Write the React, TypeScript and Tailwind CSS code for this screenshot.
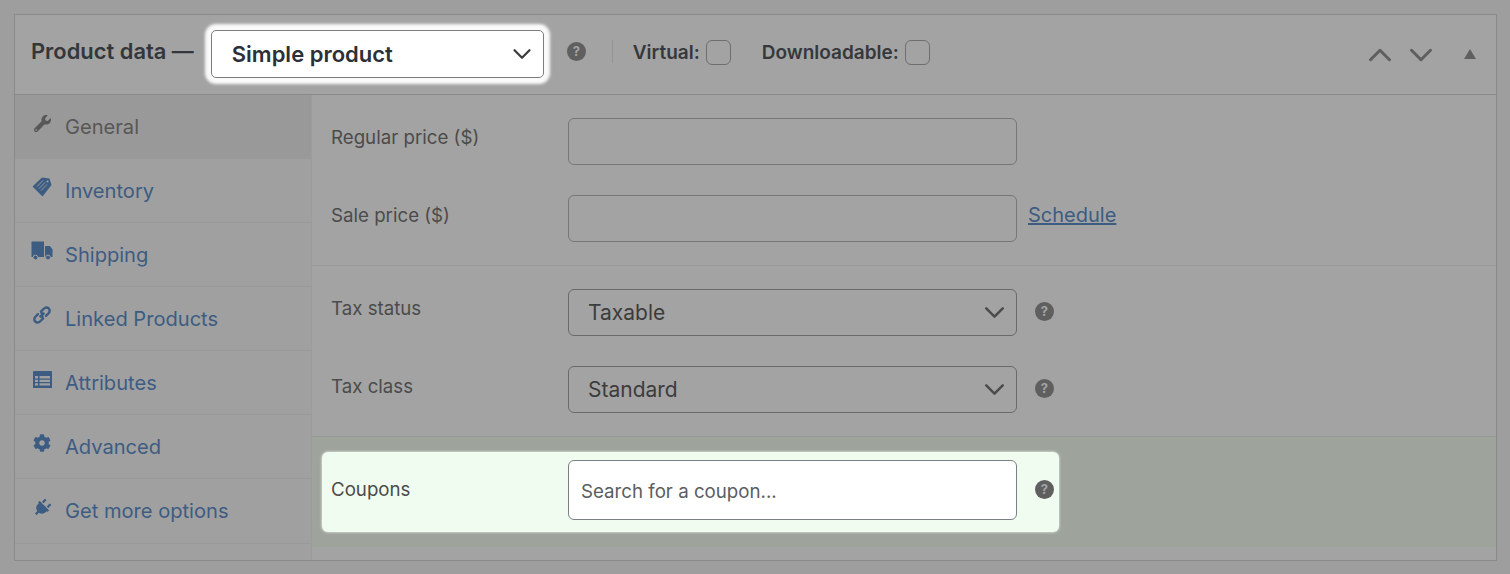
import { ChevronDown, ChevronUp } from 'lucide-react'
import type { ReactNode } from 'react'
import { FaCog, FaPlug, FaWrench } from 'react-icons/fa'

const TagIcon = () => (
  <svg viewBox="0 0 20 20" className="w-5 h-5" fill="currentColor">
    <path d="M10 0.5 L17.5 1.5 L19.5 8 L10.5 19.5 L0.5 9.5 Z" />
    <path d="M5 9.5 L11 3.5 M7 11.5 L13 5.5 M9 13.5 L15 7.5" stroke="#a0a0a0" strokeWidth="0.9" />
    <circle cx="15.5" cy="4.5" r="1.1" fill="#a0a0a0" />
  </svg>
)

const TruckIcon = () => (
  <svg viewBox="0 0 22 20" className="w-[22px] h-5" fill="currentColor">
    <path d="M0.5 1 Q0.5 0.5 1 0.5 H13 V16 H0.5 Z" />
    <path d="M14 5 H19 L21.5 8.5 V16 H14 Z" />
    <circle cx="4.5" cy="16.5" r="2.4" stroke="#a0a0a0" strokeWidth="1" />
    <circle cx="17" cy="16.5" r="2.4" stroke="#a0a0a0" strokeWidth="1" />
  </svg>
)

const LinkIcon = () => (
  <svg viewBox="0 0 20 20" className="w-5 h-5" fill="none" stroke="currentColor" strokeWidth="2.4" strokeLinecap="round">
    <path d="M8.5 11.5 L11 9 A3 3 0 0 1 9 6.5 L12 3.5 A3.2 3.2 0 0 1 16.8 8 L14 10.8" />
    <path d="M11.5 8.5 L9 11 A3 3 0 0 1 11 13.5 L8 16.5 A3.2 3.2 0 0 1 3.2 12 L6 9.2" />
  </svg>
)

const TableIcon = () => (
  <svg viewBox="0 0 19 17" className="w-[19px] h-[17px]" fill="currentColor">
    <path d="M0 1 Q0 0 1 0 H18 Q19 0 19 1 V17 H0 Z" />
    <path d="M2 5 H5 V7.5 H2 Z M2 8.8 H5 V11 H2 Z M2 12.2 H5 V14.5 H2 Z M6.5 5 H17 V7.5 H6.5 Z M6.5 8.8 H17 V11 H6.5 Z M6.5 12.2 H17 V14.5 H6.5 Z" fill="#a0a0a0" />
  </svg>
)

const tabs: { label: string; icon: ReactNode; active?: boolean }[] = [
  { label: 'General', icon: <FaWrench className="w-[17px] h-[17px]" />, active: true },
  { label: 'Inventory', icon: <TagIcon /> },
  { label: 'Shipping', icon: <TruckIcon /> },
  { label: 'Linked Products', icon: <LinkIcon /> },
  { label: 'Attributes', icon: <TableIcon /> },
  { label: 'Advanced', icon: <FaCog className="w-[18px] h-[18px]" /> },
  { label: 'Get more options', icon: <FaPlug className="w-[18px] h-[18px] rotate-45" /> },
]

const Help = () => (
  <span className="flex w-[19px] h-[19px] shrink-0 items-center justify-center rounded-full bg-[#5f5f5f] text-[13px] font-bold leading-none text-[#a3a3a3]">
    ?
  </span>
)

const Checkbox = () => (
  <span className="ml-[6px] -mt-[5px] block w-[25px] h-[25px] rounded-[6px] border border-[#6e6e6e]" />
)

const Field = ({ label, labelClass = '-mt-[6px]', children }: { label: string; labelClass?: string; children?: ReactNode }) => (
  <div className="flex items-center">
    <span className={`w-[256px] pl-[19px] shrink-0 text-[18.7px] text-[#4b4b4b] ${labelClass}`}>{label}</span>
    {children}
  </div>
)

const Input = () => (
  <div className="w-[449px] h-[47px] rounded-[6px] border border-[#777777]" />
)

const Select = ({ value }: { value: string }) => (
  <div className="flex w-[449px] h-[47px] items-center justify-between rounded-[6px] border border-[#6a6a6a] pl-[19px] pr-[5px] text-[21px] text-[#3c3c3c]">
    {value}
    <ChevronDown className="w-[33px] h-[33px] text-[#4b4b4b]" strokeWidth={1.8} />
  </div>
)

export default function App() {
  return (
    <div className="h-[574px] w-[1510px] overflow-hidden bg-[#9e9e9e] p-[14px] font-['Inter','Roboto',sans-serif]">
      <div className="h-[547px] w-[1483px] border border-[#8a8a8a] bg-[#a3a3a3]">
        <header className="flex h-[80px] items-center border-b border-[#8a8a8a] pl-[16px] pr-[20px]">
          <span className="text-[21.9px] font-semibold text-[#33363a] -mt-[6px]">Product data —</span>
          <div className="ml-[17px] -mt-[2px] flex w-[333px] h-[48px] items-center justify-between rounded-[5px] border border-[#7d7d7d] bg-white pl-[20px] pr-[6px] text-[22px] font-semibold text-[#2c3038] shadow-[0_0_3px_6px_rgba(255,255,255,0.95)]">
            <span className="mt-[2px]">Simple product</span>
            <ChevronDown className="w-[30px] h-[30px] text-[#3c3c3c]" strokeWidth={1.8} />
          </div>
          <div className="ml-[23px] -mt-[7px]"><Help /></div>
          <span className="ml-[26px] -mt-[7px] h-[23px] w-px bg-[#949494]" />
          <span className="ml-[20px] -mt-[2px] text-[19px] font-semibold text-[#36383c]">Virtual:</span>
          <Checkbox />
          <span className="ml-[31px] -mt-[2px] text-[19px] font-semibold text-[#36383c]">Downloadable:</span>
          <Checkbox />
          <div className="ml-auto flex items-center text-[#5f5f5f]">
            <ChevronUp className="w-[38px] h-[38px]" strokeWidth={1.9} />
            <ChevronDown className="ml-[3px] w-[38px] h-[38px]" strokeWidth={1.9} />
            <span className="ml-[24px] -mt-[2px] h-0 w-0 border-x-[6px] border-b-[10px] border-x-transparent border-b-[#5f5f5f]" />
          </div>
        </header>
        <div className="flex h-[465px]">
          <nav className="w-[297px] shrink-0 border-r border-[#9c9c9c] bg-[#a0a0a0]">
            {tabs.map(tab => (
              <div
                key={tab.label}
                className={`flex h-[64.09px] items-center border-b ${
                  tab.active ? 'border-transparent bg-[#999999] text-[#575757]' : 'border-[#999999] text-[#3d5c82]'
                }`}
              >
                <span className="flex w-[50px] shrink-0 justify-center pl-[4px] -mt-[7px]">{tab.icon}</span>
                <span className="mt-[1px] text-[20.1px]">{tab.label}</span>
              </div>
            ))}
          </nav>
          <main className="flex-1 flex flex-col">
            <div className="flex flex-col gap-[30px] pt-[23px] pb-[23px] border-b border-[#999999]">
              <Field label="Regular price ($)"><Input /></Field>
              <Field label="Sale price ($)" labelClass="-mt-[4px]">
                <Input />
                <a className="ml-[11px] -mt-[8px] text-[20px] text-[#3d5c82] underline">Schedule</a>
              </Field>
            </div>
            <div className="flex flex-col gap-[30px] pt-[23px] pb-[23px] border-b border-[#999999]">
              <Field label="Tax status">
                <Select value="Taxable" />
                <span className="ml-[18px] -mt-[2px]"><Help /></span>
              </Field>
              <Field label="Tax class" labelClass="-mt-[4px]">
                <Select value="Standard" />
                <span className="ml-[18px] -mt-[2px]"><Help /></span>
              </Field>
            </div>
            <div className="h-[110px] bg-[#9ea39c] pt-[15px] pl-[10px]">
              <div className="flex h-[80px] w-[737px] items-center rounded-[6px] bg-[#f1fcf0] pl-[9px] shadow-[0_0_3px_0_#f1fcf0]">
                <span className="w-[237px] shrink-0 text-[18.7px] text-[#4b4b4b] -mt-[4px]">Coupons</span>
                <div className="flex w-[449px] h-[60px] mb-[2px] -mt-[2px] items-center rounded-[6px] border border-[#7b8087] bg-white pl-[12px] pt-[4px] text-[18.7px] text-[#5a5d61]">
                  Search for a coupon...
                </div>
                <span className="ml-[18px] -mt-[6px]"><Help /></span>
              </div>
            </div>
          </main>
        </div>
      </div>
    </div>
  )
}
